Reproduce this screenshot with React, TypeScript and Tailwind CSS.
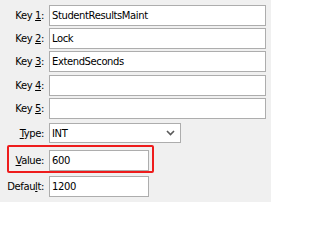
const font = { fontFamily: '"DejaVu Sans", Verdana, sans-serif' };

function Label({ pre, u, post }: { pre: string; u: string; post: string }) {
  return (
    <div className="w-[45px] shrink-0 pr-[1px] text-right whitespace-nowrap text-[10px] tracking-[-0.4px] text-black">
      {pre}
      <span className="underline underline-offset-[1px]">{u}</span>
      {post}
    </div>
  );
}

function Field({ value, width }: { value: string; width: string }) {
  return (
    <div
      className={`${width} h-[21px] border border-[#adadad] bg-white flex items-center pl-[2px] text-[10px] tracking-[-0.4px] text-black`}
    >
      {value}
    </div>
  );
}

export default function App() {
  return (
    <div style={font} className="w-[271px] h-[202px] bg-[#f0f0f0] flex flex-col pt-[5px]">
      {[
        ['1', 'StudentResultsMaint'],
        ['2', 'Lock'],
        ['3', 'ExtendSeconds'],
        ['4', ''],
        ['5', ''],
      ].map(([k, v], i) => (
        <div key={k} className={`flex items-center gap-[4px] ${i === 3 ? 'mt-[3px]' : i > 0 ? 'mt-[2px]' : ''}`}>
          <Label pre="Key " u={k} post=":" />
          <Field value={v} width="w-[217px]" />
        </div>
      ))}

      <div className="flex items-center gap-[4px] mt-[4px]">
        <Label pre="" u="T" post="ype:" />
        <div className="w-[132px] h-[20px] border border-[#adadad] bg-white flex items-center justify-between pl-[2px] pr-[5px] text-[10px] tracking-[-0.4px] text-black">
          INT
          <svg width="9" height="6" viewBox="0 0 9 6">
            <path d="M1 1 L4.5 4.5 L8 1" fill="none" stroke="#5a5a5a" strokeWidth="1.6" />
          </svg>
        </div>
      </div>

      <div className="relative flex items-center gap-[4px] mt-[7px]">
        <Label pre="" u="V" post="alue:" />
        <Field value="600" width="w-[100px]" />
        <div className="absolute left-[7px] top-[-5px] w-[147px] h-[28px] border-2 border-[#ee1c1c] rounded-[2px]" />
      </div>

      <div className="flex items-center gap-[4px] mt-[5px]">
        <Label pre="Defau" u="l" post="t:" />
        <Field value="1200" width="w-[100px]" />
      </div>
    </div>
  );
}
